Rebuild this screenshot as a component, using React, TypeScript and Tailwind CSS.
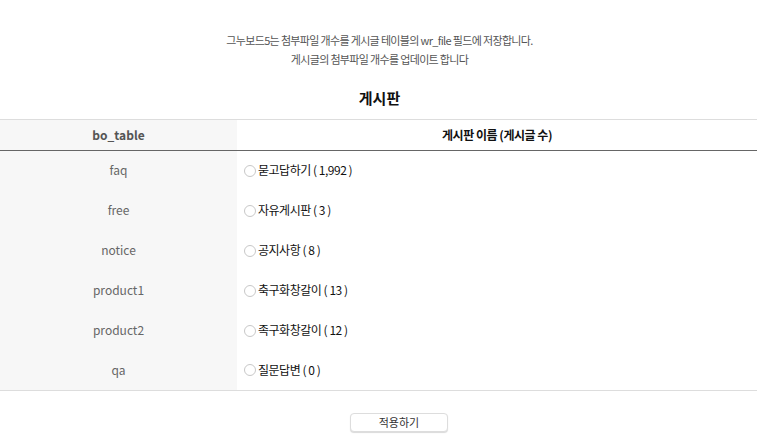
import React from "react";

interface Board {
  id: string;
  name: string;
  count: string;
}

const boards: Board[] = [
  { id: "faq", name: "묻고답하기", count: "1,992" },
  { id: "free", name: "자유게시판", count: "3" },
  { id: "notice", name: "공지사항", count: "8" },
  { id: "product1", name: "축구화창갈이", count: "13" },
  { id: "product2", name: "족구화창갈이", count: "12" },
  { id: "qa", name: "질문답변", count: "0" },
];

export default function App() {
  return (
    <div
      className="w-[759px] h-[439px] bg-white overflow-hidden"
      style={{ fontFamily: '"Noto Sans CJK KR", "Noto Sans", sans-serif' }}
    >
      <div className="pt-[31px] text-center text-[11px] leading-[19px] text-[#555] tracking-[-0.06em]">
        <p>그누보드5는 첨부파일 개수를 게시글 테이블의 wr_file 필드에 저장합니다.</p>
        <p>게시글의 첨부파일 개수를 업데이트 합니다</p>
      </div>

      <h2 className="mt-[19px] text-center text-[15px] leading-[20px] font-bold text-[#111]">게시판</h2>

      <table className="mt-[11px] w-[757px] border-collapse border-t border-[#ddd] text-[12px]">
        <thead>
          <tr className="h-[31px] border-b border-[#666]">
            <th className="w-[237px] bg-[#f7f7f7] font-semibold text-[#555] text-center">bo_table</th>
            <th className="font-bold text-[#111] text-center tracking-[-0.04em]">게시판 이름 (게시글 수)</th>
          </tr>
        </thead>
        <tbody className="border-b border-[#ddd]">
          {boards.map((b) => (
            <tr key={b.id} className="h-[40px]">
              <td className="bg-[#f7f7f7] text-center text-[#666] pb-[1px]">{b.id}</td>
              <td className="pl-[7px] pb-[1px]">
                <label className="flex items-center gap-[2px] text-[#111] tracking-[-0.04em]">
                  <span className="inline-block w-[12px] h-[12px] mt-[1px] rounded-full border border-[#c8c8c8] bg-white"></span>
                  <span>
                    {b.name} ( {b.count} )
                  </span>
                </label>
              </td>
            </tr>
          ))}
        </tbody>
      </table>

      <div className="mt-[17px] pl-[350px]">
        <button className="w-[98px] h-[19px] rounded-[4px] border border-[#ddd] bg-white shadow-[0_1px_1px_rgba(0,0,0,0.15)] text-[11px] leading-[17px] text-[#333]">
          적용하기
        </button>
      </div>
    </div>
  );
}
